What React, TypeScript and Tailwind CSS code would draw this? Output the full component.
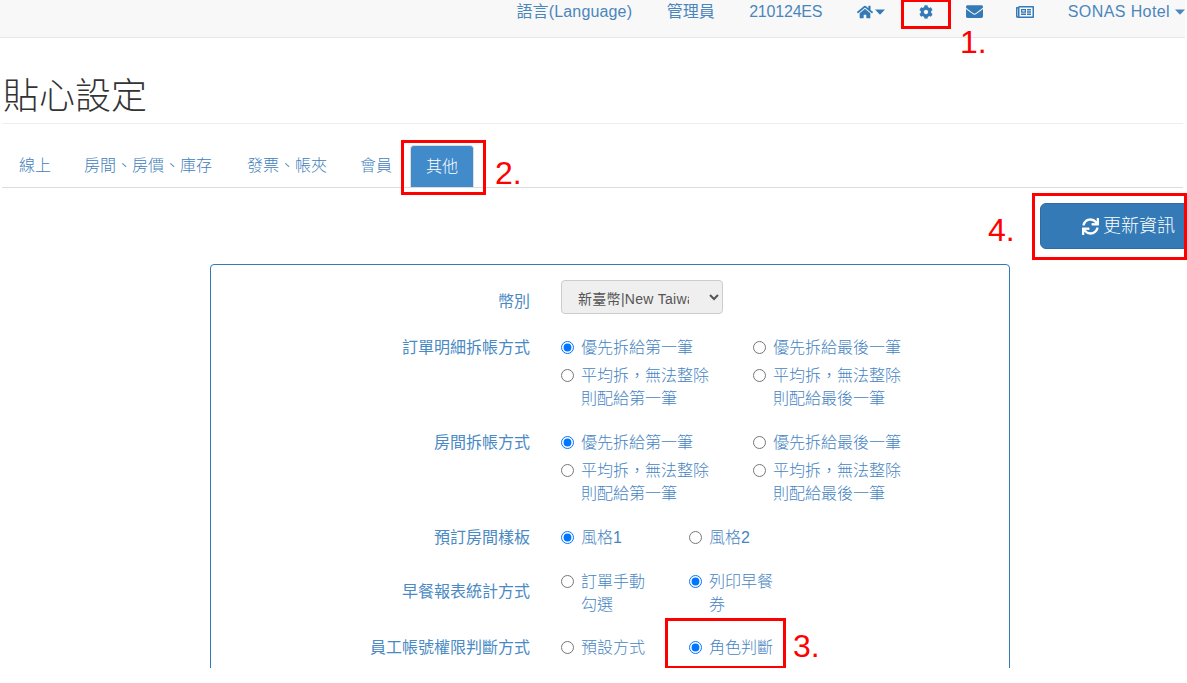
import React from "react";
import { FaHome, FaCog, FaEnvelope, FaRegNewspaper, FaSync } from "react-icons/fa";

const font = { fontFamily: '"Liberation Sans", "Noto Sans CJK TC", sans-serif' };

function Caret() {
  return (
    <svg width="10" height="6" viewBox="0 0 10 6" className="shrink-0" fill="currentColor">
      <path d="M0 0.5h10L5 5.8z" />
    </svg>
  );
}

function Radio({ checked, lines, w }: { checked?: boolean; lines: string[]; w: string }) {
  return (
    <label className={`flex items-start gap-[7px] ${w}`}>
      <input type="radio" defaultChecked={checked} className="mt-[5px] h-[13px] w-[13px] shrink-0" />
      <span className="font-light leading-[23px] text-[#4684c2]">
        {lines.map((l) => (
          <span key={l} className="block">{l}</span>
        ))}
      </span>
    </label>
  );
}

function Row({ label, children, labelClass = "" }: { label: string; children: React.ReactNode; labelClass?: string }) {
  return (
    <div className="flex items-start">
      <div className={`w-[320px] pr-[1px] text-right leading-[23px] text-[#4a8ac4] ${labelClass}`}>{label}</div>
      <div className="ml-[30px] flex-1">{children}</div>
    </div>
  );
}

function SplitOptions() {
  return (
    <div className="flex flex-col gap-[5px]">
      <div className="flex">
        <Radio w="w-[192px]" checked lines={["優先拆給第一筆"]} />
        <Radio w="w-[192px]" lines={["優先拆給最後一筆"]} />
      </div>
      <div className="flex">
        <Radio w="w-[192px]" lines={["平均拆，無法整除", "則配給第一筆"]} />
        <Radio w="w-[192px]" lines={["平均拆，無法整除", "則配給最後一筆"]} />
      </div>
    </div>
  );
}

function RedBox({ className }: { className: string }) {
  return <div className={`absolute border-[3px] border-[#ff0000] ${className}`} />;
}

function Mark({ className, children }: { className: string; children: string }) {
  return <div className={`absolute text-[32px] leading-none text-[#ff0000] ${className}`}>{children}</div>;
}

export default function App() {
  return (
    <div className="relative h-[668px] w-[1187px] overflow-hidden bg-white text-[16px]" style={font}>
      <nav className="flex h-[38px] w-[1185px] items-start justify-end gap-[34.5px] border-b border-[#e7e7e7] bg-[#f8f8f8] leading-[23px] text-[#4a86bd]">
        <span className="tracking-[0.15px]">語言(Language)</span>
        <span>管理員</span>
        <span className="tracking-[-0.2px]">210124ES</span>
        <span className="flex h-[23px] items-center gap-[2px] text-[#337ab7]">
          <FaHome className="text-[16px]" />
          <Caret />
        </span>
        <span className="flex h-[23px] items-center text-[#337ab7]"><FaCog className="text-[14px]" /></span>
        <span className="-ml-[2px] flex h-[23px] items-center text-[#337ab7]"><FaEnvelope className="text-[17px]" /></span>
        <span className="-ml-[1px] flex h-[23px] items-center text-[#337ab7]"><FaRegNewspaper className="text-[18px]" /></span>
        <span className="-ml-[1px] flex items-center gap-[5px] tracking-[0.4px]">SONAS Hotel<Caret /></span>
      </nav>

      <div className="w-[1185px] px-[3px]">
        <h1 className="-mx-[1px] mt-[39px] border-b border-[#eeeeee] pb-[6px] pl-[1px] text-[36px] font-light leading-[40px] text-[#333333]">貼心設定</h1>

        <div className="-mx-[1px] mt-[21px] flex h-[43px] items-end border-b border-[#dddddd] pl-[1px]">
          <span className="pl-[16px] pr-[14px] pt-[1px] font-light leading-[42px] text-[#3f80bb]">線上</span>
          <span className="ml-[4px] px-[15px] pt-[1px] font-light leading-[42px] text-[#3f80bb]">房間、房價、庫存</span>
          <span className="ml-[5px] px-[15px] pt-[1px] font-light leading-[42px] text-[#3f80bb]">發票、帳夾</span>
          <span className="ml-[3px] px-[15px] pt-[1px] font-light leading-[42px] text-[#3f80bb]">會員</span>
          <span className="ml-[3px] w-[64px] rounded-t-[4px] border border-b-0 border-[#dddddd] bg-[#428bca] text-center font-light leading-[41px] text-white">其他</span>
        </div>
      </div>

      <div className="mt-[15px] flex">
        <button className="ml-[1040px] flex h-[46px] w-[177px] shrink-0 items-center justify-center gap-[4px] rounded-[6px] border border-[#2e6da4] bg-[#337ab7] text-[18px] font-light text-white">
          <FaSync className="text-[17px]" />更新資訊
        </button>
      </div>

      <div className="ml-[210px] mt-[15px] h-[500px] w-[800px] rounded-t-[4px] border border-[#337ab7] pt-[15px]">
        <div className="flex flex-col gap-[21px]">
          <Row label="幣別" labelClass="mt-[10px]">
            <select className="mb-[1px] block h-[34px] w-[162px] rounded-[4px] border border-[#cccccc] bg-[#efefef] pb-0 pl-[12px] pr-[17px] pt-[3px] text-[14px] tracking-[0.3px] text-[#555555]">
              <option>新臺幣|New Taiwan Dollar</option>
            </select>
          </Row>
          <Row label="訂單明細拆帳方式"><SplitOptions /></Row>
          <Row label="房間拆帳方式"><SplitOptions /></Row>
          <Row label="預訂房間樣板">
            <div className="flex">
              <Radio w="w-[128px]" checked lines={["風格1"]} />
              <Radio w="w-[128px]" lines={["風格2"]} />
            </div>
          </Row>
          <Row label="早餐報表統計方式" labelClass="mt-[10px]">
            <div className="flex">
              <Radio w="w-[128px]" lines={["訂單手動", "勾選"]} />
              <Radio w="w-[128px]" checked lines={["列印早餐", "券"]} />
            </div>
          </Row>
          <div className="-mt-[1px]">
            <Row label="員工帳號權限判斷方式">
              <div className="flex">
                <Radio w="w-[128px]" lines={["預設方式"]} />
                <Radio w="w-[128px]" checked lines={["角色判斷"]} />
              </div>
            </Row>
          </div>
        </div>
      </div>

      <RedBox className="left-[901px] top-[0px] h-[29px] w-[50px] border-t-[2px]" />
      <RedBox className="left-[401px] top-[140px] h-[55px] w-[85px]" />
      <RedBox className="left-[1032px] top-[193px] h-[67px] w-[155px]" />
      <RedBox className="left-[665px] top-[618px] h-[51px] w-[121px]" />
      <Mark className="left-[960px] top-[26px]">1.</Mark>
      <Mark className="left-[495px] top-[157px]">2.</Mark>
      <Mark className="left-[793px] top-[630px]">3.</Mark>
      <Mark className="left-[988px] top-[214px]">4.</Mark>
    </div>
  );
}
